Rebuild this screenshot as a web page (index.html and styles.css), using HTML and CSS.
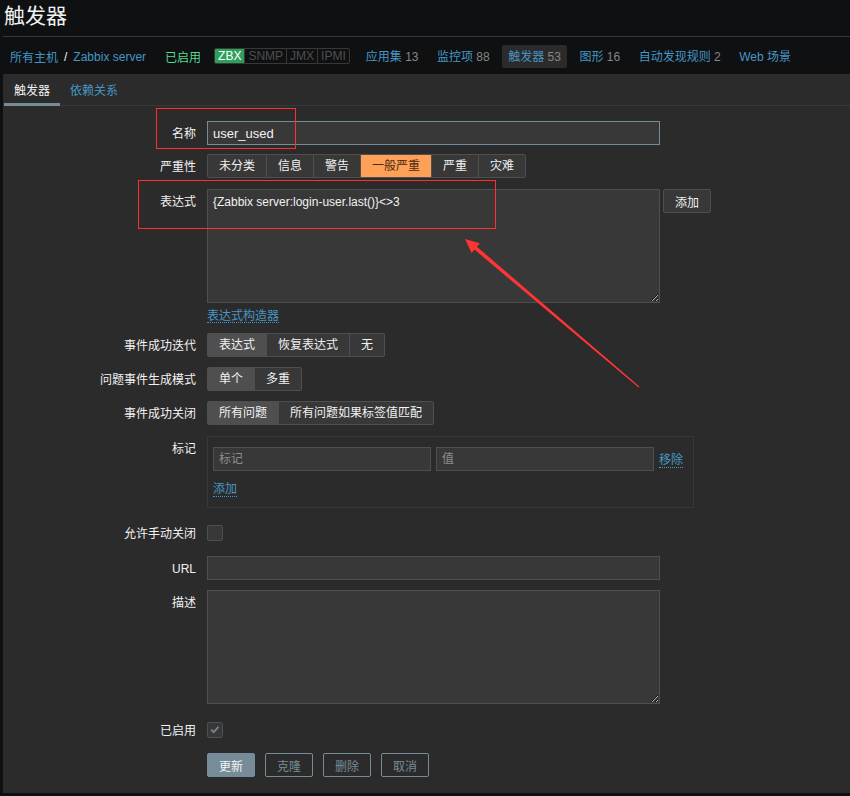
FILE: index.html
```html
<!DOCTYPE html>
<html lang="zh-CN">
<head>
<meta charset="utf-8">
<title>触发器</title>
<link rel="stylesheet" href="styles.css">
</head>
<body>
<div class="page">
  <header class="header"><h1 class="title">触发器</h1></header>
  <nav class="host-nav">
    <a class="crumb">所有主机</a><span class="crumb-sep">/</span><a class="crumb">Zabbix server</a>
    <span class="status-on">已启用</span>
    <span class="badges"><span class="badge badge-on">ZBX</span><span class="badge">SNMP</span><span class="badge">JMX</span><span class="badge">IPMI</span></span>
    <ul class="nav-items">
      <li class="nav-item"><a>应用集</a> <span class="count">13</span></li>
      <li class="nav-item"><a>监控项</a> <span class="count">88</span></li>
      <li class="nav-item nav-item-active"><a>触发器</a> <span class="count">53</span></li>
      <li class="nav-item"><a>图形</a> <span class="count">16</span></li>
      <li class="nav-item"><a>自动发现规则</a> <span class="count">2</span></li>
      <li class="nav-item"><a>Web 场景</a></li>
    </ul>
  </nav>
  <main class="content">
    <div class="tabs"><span class="tab tab-active">触发器</span><a class="tab">依赖关系</a></div>
    <form class="form">
      <div class="row row-name">
        <label class="label">名称</label>
        <input class="input input-focus" type="text" value="user_used">
      </div>
      <div class="row row-sev">
        <label class="label">严重性</label>
        <div class="seg"><span>未分类</span><span>信息</span><span>警告</span><span class="sev-avg">一般严重</span><span>严重</span><span>灾难</span></div>
      </div>
      <div class="row">
        <label class="label">表达式</label>
        <div class="field">
          <div class="expr-line"><textarea class="textarea">{Zabbix server:login-user.last()}&lt;&gt;3</textarea><button type="button" class="btn btn-alt">添加</button></div>
          <a class="link link-builder">表达式构造器</a>
        </div>
      </div>
      <div class="row">
        <label class="label">事件成功迭代</label>
        <div class="seg"><span class="on">表达式</span><span>恢复表达式</span><span>无</span></div>
      </div>
      <div class="row">
        <label class="label">问题事件生成模式</label>
        <div class="seg"><span class="on">单个</span><span>多重</span></div>
      </div>
      <div class="row">
        <label class="label">事件成功关闭</label>
        <div class="seg"><span class="on">所有问题</span><span>所有问题如果标签值匹配</span></div>
      </div>
      <div class="row row-tags">
        <label class="label">标记</label>
        <div class="tag-box">
          <div class="tag-line">
            <input class="input input-tag" type="text" placeholder="标记">
            <input class="input input-tag" type="text" placeholder="值">
            <a class="link">移除</a>
          </div>
          <a class="link link-add">添加</a>
        </div>
      </div>
      <div class="row row-check">
        <label class="label label-check">允许手动关闭</label>
        <span class="checkbox"></span>
      </div>
      <div class="row">
        <label class="label">URL</label>
        <input class="input" type="text">
      </div>
      <div class="row">
        <label class="label">描述</label>
        <textarea class="textarea"></textarea>
      </div>
      <div class="row row-check row-check2">
        <label class="label label-check">已启用</label>
        <span class="checkbox"><svg class="check" viewBox="0 0 16 16" width="14" height="14"><polyline points="3.5,7.5 6.5,10.5 12,4.5" fill="none" stroke="#6e8796" stroke-width="2.2"/></svg></span>
      </div>
      <div class="row row-buttons">
        <span></span>
        <div class="buttons">
          <button type="button" class="btn btn-main">更新</button>
          <button type="button" class="btn btn-outline">克隆</button>
          <button type="button" class="btn btn-outline">删除</button>
          <button type="button" class="btn btn-outline">取消</button>
        </div>
      </div>
    </form>
  </main>
</div>
<div class="annot annot-name"></div>
<div class="annot annot-expr"></div>
<svg class="arrow" viewBox="0 0 850 796" width="850" height="796">
  <polygon fill="#ff3434" points="465,239 479.8,243.3 476.9,246.7 639.4,386.6 638.6,387.4 474.5,249.6 471.6,252.9"/>
</svg>
</body>
</html>
```
FILE: styles.css
```css
* { box-sizing: border-box; }
html, body { margin: 0; padding: 0; }
body {
  width: 850px;
  height: 796px;
  overflow: hidden;
  position: relative;
  background: #0e1012;
  color: #f2f2f2;
  font-family: "Liberation Sans", "Noto Sans CJK SC", sans-serif;
  font-size: 12px;
}
.page { padding-left: 3px; }

.header { height: 37px; border-bottom: 1px solid #383838; }
.title {
  margin: 0;
  padding-left: 1px;
  font-size: 21px;
  font-weight: normal;
  line-height: 32px;
  color: #f2f2f2;
}

.host-nav {
  height: 37px;
  display: flex;
  align-items: center;
  padding-left: 7px;
  padding-top: 2px;
}
.crumb { color: #4796c4; text-decoration: none; }
.crumb-sep { margin: 0 6px; color: #f2f2f2; }
.status-on { color: #59db8f; margin-left: 19px; }
.badges {
  display: flex;
  margin-left: 13px;
  margin-top: -1px;
  border: 1px solid #383838;
  border-radius: 2px;
  height: 16px;
  overflow: hidden;
}
.badge {
  padding: 0 3px;
  line-height: 14px;
  color: #4f4f4f;
  border-left: 1px solid #383838;
}
.badge:first-child { border-left: 0; }
.badge-on { background: #2f9f5e; color: #ffffff; }

.nav-items {
  display: flex;
  gap: 6.5px;
  list-style: none;
  margin: -1px 0 0 10px;
  padding: 0;
}
.nav-item { padding: 1px 6px 0; height: 23px; line-height: 22px; border-radius: 2px; }
.nav-item a { color: #4796c4; }
.nav-item .count { color: #868686; }
.nav-item-active { background: #2b2b2b; }

.content { background: #2b2b2b; height: 719px; }
.tabs {
  display: flex;
  align-items: flex-start;
  height: 32px;
  border-bottom: 1px solid #383838;
  padding-left: 1px;
}
.tab { display: block; padding: 1px 10px 0; height: 31px; line-height: 32px; color: #4796c4; }
.tab-active { color: #f2f2f2; height: 32px; border-bottom: 3px solid #768d99; }

.form { padding-top: 10px; }
.row {
  display: grid;
  grid-template-columns: 193px 1fr;
  column-gap: 11px;
  padding: 5px 0;
  align-items: start;
  justify-items: start;
}
.row-name { padding-bottom: 4px; }
.row-sev { padding-bottom: 6px; }
.row-tags { padding-top: 6px; }
.row-check { padding-top: 12px; padding-bottom: 10px; }
.row-check2 { padding-top: 13px; }
.label {
  justify-self: stretch;
  text-align: right;
  height: 24px;
  padding-top: 2px;
  line-height: 22px;
  white-space: nowrap;
  color: #f2f2f2;
}
.label-check { height: 16px; line-height: 14px; padding-top: 2px; }

.input {
  display: block;
  width: 453px;
  height: 24px;
  margin: 0;
  background: #383838;
  border: 1px solid #4f4f4f;
  border-radius: 0;
  color: #f2f2f2;
  font: inherit;
  padding: 0 5px;
  outline: none;
}
.input-focus { border-color: #768d99; font-size: 13px; }
.input::placeholder { color: #8f8f8f; }
.textarea {
  display: block;
  width: 453px;
  height: 114px;
  margin: 0;
  background: #383838;
  border: 1px solid #4f4f4f;
  border-radius: 0;
  color: #f2f2f2;
  font: inherit;
  line-height: 14px;
  padding: 5px 5px 4px;
  outline: none;
  resize: both;
}

.seg {
  display: inline-flex;
  height: 24px;
  border: 1px solid #4f4f4f;
  border-radius: 2px;
  background: #383838;
  overflow: hidden;
}
.seg span {
  padding: 1px 11px 0;
  line-height: 21px;
  border-left: 1px solid #4f4f4f;
  white-space: nowrap;
}
.seg span:first-child { border-left: 0; }
.seg .on { background: #4f4f4f; }
.seg .sev-avg { background: #ffa059; color: #4a2a10; }

.expr-line { display: flex; gap: 3px; align-items: flex-start; }
.link { color: #4796c4; text-decoration: none; border-bottom: 1px dotted #4796c4; }
.link-builder { display: inline-block; margin-top: 6px; height: 14px; line-height: 12px; padding-top: 1px; }

.btn {
  height: 24px;
  margin: 0;
  padding: 1px 11px 0;
  font: inherit;
  border-radius: 2px;
  white-space: nowrap;
}
.btn-alt { background: #383838; border: 1px solid #4f4f4f; color: #f2f2f2; }
.btn-main { background: #768d99; border: 1px solid #768d99; color: #f2f2f2; }
.btn-outline { background: transparent; border: 1px solid #768d99; color: #768d99; }
.buttons { display: flex; gap: 10px; }

.tag-box {
  width: 487px;
  height: 72px;
  border: 1px solid #383838;
  padding: 10px 5px;
}
.tag-line { display: flex; align-items: center; gap: 5px; }
.input-tag { width: 218px; }
.link-add { display: inline-block; margin-top: 12px; height: 14px; line-height: 13px; }

.checkbox {
  display: block;
  width: 16px;
  height: 16px;
  background: #383838;
  border: 1px solid #4f4f4f;
  border-radius: 2px;
}
.check { display: block; }

.annot {
  position: absolute;
  border: 1px solid #ff2f2f;
  pointer-events: none;
}
.annot-name { left: 156px; top: 108px; width: 140px; height: 41px; }
.annot-expr { left: 138px; top: 180px; width: 358px; height: 49px; }
.arrow { position: absolute; left: 0; top: 0; pointer-events: none; }
```
